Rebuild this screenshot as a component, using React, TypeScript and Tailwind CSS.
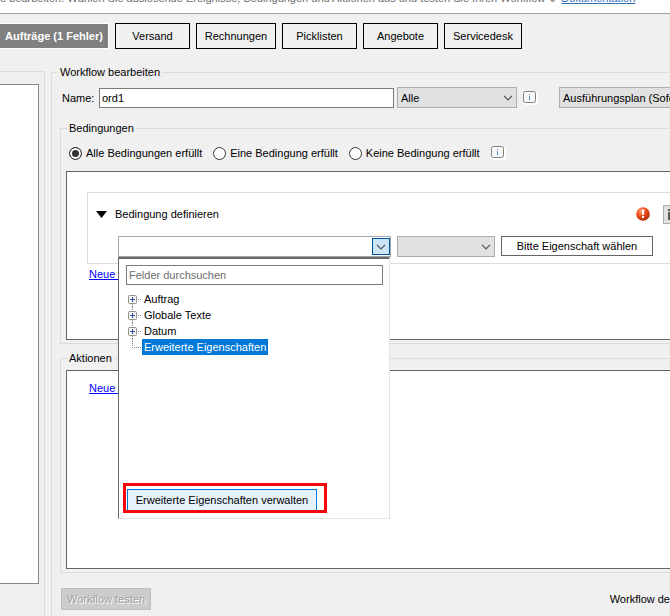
import { useState } from 'react'

const tabs = [
  { name: 'Versand', width: 'w-[75px]' },
  { name: 'Rechnungen', width: 'w-20' },
  { name: 'Picklisten', width: 'w-[75px]' },
  { name: 'Angebote', width: 'w-[75px]' },
  { name: 'Servicedesk', width: 'w-[78px]' },
]

const matchModes = ['Alle Bedingungen erfüllt', 'Eine Bedingung erfüllt', 'Keine Bedingung erfüllt']

const fieldGroups = ['Auftrag', 'Globale Texte', 'Datum']

function Chevron() {
  return (
    <svg width="10" height="6" viewBox="0 0 10 6" fill="none" stroke="#505050" strokeWidth="1.2" aria-hidden="true">
      <path d="M1 0.8 L5 4.8 L9 0.8" />
    </svg>
  )
}

function InfoIcon() {
  return (
    <svg width="15" height="14" viewBox="0 0 15 14" aria-hidden="true" className="block shrink-0">
      <rect x="1" y="1" width="14" height="13" rx="2" fill="#fff" />
      <rect x="0.5" y="0.5" width="12" height="11" rx="2" fill="#f7f7f7" stroke="#808080" />
      <rect x="6" y="3" width="1" height="1" fill="#5b93cc" />
      <rect x="6" y="5" width="1" height="4" fill="#5b93cc" />
    </svg>
  )
}

function ErrorIcon() {
  return (
    <svg width="14" height="14" viewBox="0 0 14 14" aria-hidden="true" className="shrink-0">
      <defs>
        <radialGradient id="errorFill" cx="0.35" cy="0.3" r="0.75">
          <stop offset="0" stopColor="#ff9a70" />
          <stop offset="0.5" stopColor="#ee4a1c" />
          <stop offset="1" stopColor="#a92a0c" />
        </radialGradient>
      </defs>
      <circle cx="7" cy="7" r="6.8" fill="url(#errorFill)" />
      <path d="M5.6 2.6 h2.8 l-0.5 5.4 h-1.8 z" fill="#fff" />
      <rect x="6" y="9" width="2" height="2" fill="#fff" />
    </svg>
  )
}

function TreeBranch({ first }: { first: boolean }) {
  return (
    <svg width="14" height="16" viewBox="0 0 14 16" aria-hidden="true" className="shrink-0">
      {!first && <path d="M4.5 0 V4" stroke="#808080" strokeDasharray="1 1" />}
      <path d="M4.5 13 V16" stroke="#808080" strokeDasharray="1 1" />
      <path d="M10 8.5 H14" stroke="#808080" strokeDasharray="1 1" />
      <rect x="0.5" y="4.5" width="8" height="8" rx="1" fill="#f7f7f7" stroke="#919191" />
      <path d="M2 8.5 H7 M4.5 6 V11" stroke="#3a4fa0" />
    </svg>
  )
}

function FieldPopup() {
  return (
    <div className="absolute top-full left-0 z-10 flex h-[262px] w-[272px] flex-col border-t-2 border-r border-b border-l border-t-[#696969] border-r-[#e3e3e3] border-b-[#e3e3e3] border-l-[#696969] bg-white pt-1.5 pr-1.5 pb-[7px] pl-[7px]">
      <input
        type="text"
        placeholder="Felder durchsuchen"
        aria-label="Felder durchsuchen"
        className="h-5 w-full border border-[#7a7a7a] bg-white px-0.5 outline-none placeholder:text-[#6d6d6d]"
      />
      <ul className="mt-1.5 ml-0.5">
        {fieldGroups.map((group, i) => (
          <li key={group} className="flex h-4 items-center">
            <TreeBranch first={i === 0} />
            <span className="px-0.5">{group}</span>
          </li>
        ))}
        <li className="flex h-4 items-center">
          <svg width="14" height="16" viewBox="0 0 14 16" fill="none" aria-hidden="true" className="shrink-0">
            <path d="M4.5 0 V8.5 H14" stroke="#808080" strokeDasharray="1 1" />
          </svg>
          <span className="bg-[#0078d7] px-0.5 leading-4 text-white">Erweiterte Eigenschaften</span>
        </li>
      </ul>
      <div className="mt-auto flex pl-px">
        <button type="button" className="relative h-[22px] w-[190px] border border-[#0078d7] bg-[#e5f1fb]">
          Erweiterte Eigenschaften verwalten
          <span className="pointer-events-none absolute -top-[7px] -right-[11px] -bottom-[3px] -left-[5px] border-[3px] border-[#f5070b]" />
        </button>
      </div>
    </div>
  )
}

export default function App() {
  const [name, setName] = useState('ord1')
  const [mode, setMode] = useState(matchModes[0])
  const [open, setOpen] = useState(true)

  return (
    <div className="flex min-h-screen flex-col overflow-hidden bg-[#f0f0f0] font-['Liberation_Sans',Arial,sans-serif] text-[11px] leading-[14px] whitespace-nowrap text-black">
      <header className="flex h-3.5 items-end gap-1 overflow-hidden border-b border-[#a0a0a0] bg-white pb-2 text-[#6d6d6d]">
        <p>e bearbeiten. Wählen Sie auslösende Ereignisse, Bedingungen und Aktionen aus und testen Sie Ihren Workflow ⇓</p>
        <a href="#doku" className="text-[#2f6fb8] underline">Dokumentation</a>
      </header>

      <nav className="flex gap-1.5 pt-[9px]">
        <button type="button" className="h-[26px] w-[109px] border border-l-0 border-white bg-[#808080] font-bold text-white">
          Aufträge (1 Fehler)
        </button>
        {tabs.map(tab => (
          <button key={tab.name} type="button" className={`h-[26px] border border-black ${tab.width}`}>
            {tab.name}
          </button>
        ))}
      </nav>

      <main className="mt-4 flex flex-1 gap-1.5">
        <div className="mt-1.5 flex w-[45px] shrink-0 flex-col border-t border-r border-[#dcdcdc] pt-3 pr-[5px] pb-8">
          <div className="flex-1 border border-l-0 border-[#828790] bg-white" />
        </div>

        <fieldset className="min-w-0 flex-1 border-t border-l border-[#dcdcdc]">
          <legend className="ml-1.5 px-0.5">Workflow bearbeiten</legend>

          <div className="mt-2 flex h-[21px] items-center pl-2.5">
            <label htmlFor="name" className="w-[37px] shrink-0">Name:</label>
            <input
              id="name"
              type="text"
              value={name}
              onChange={e => setName(e.target.value)}
              className="h-5 w-[295px] shrink-0 border border-[#7a7a7a] bg-white px-0.5 outline-none"
            />
            <div className="relative ml-[3px] shrink-0">
              <select aria-label="Filter" className="block h-[21px] w-[120px] appearance-none border border-[#adadad] bg-[#e1e1e1] px-[3px]">
                <option>Alle</option>
              </select>
              <span className="pointer-events-none absolute top-2 right-1"><Chevron /></span>
            </div>
            <button type="button" aria-label="Info" className="mr-[21px] ml-1.5"><InfoIcon /></button>
            <button type="button" className="h-[21px] shrink-0 border border-[#adadad] bg-[#e1e1e1] px-[3px]">
              Ausführungsplan (Sofort)
            </button>
          </div>

          <fieldset className="mt-[13px] ml-2 min-w-0 border-y border-l border-[#dcdcdc] pb-[3px] pl-[5px]">
            <legend className="ml-px px-0.5">Bedingungen</legend>
            <div className="mt-[11px] flex items-center gap-[11px] pl-[3px]">
              {matchModes.map(m => (
                <label key={m} className="flex items-center gap-1">
                  <input
                    type="radio"
                    name="mode"
                    checked={mode === m}
                    onChange={() => setMode(m)}
                    className="size-[13px] appearance-none rounded-full border border-[#333] bg-white checked:bg-[#333] checked:shadow-[inset_0_0_0_2px_#fff]"
                  />
                  {m}
                </label>
              ))}
              <button type="button" aria-label="Info"><InfoIcon /></button>
            </div>

            <div className="mt-[11px] min-h-[169px] border-y border-l border-[#646464] bg-white pt-5 pl-5">
              <div className="border-y border-l border-[#dcdcdc] pt-2.5 pb-1.5">
                <div className="flex h-[22px] items-center pl-2">
                  <button type="button" aria-label="Bedingung einklappen">
                    <svg width="11" height="7" viewBox="0 0 11 7" aria-hidden="true">
                      <path d="M0 0 H11 L5.5 7 Z" fill="#000" />
                    </svg>
                  </button>
                  <span className="ml-2">Bedingung definieren</span>
                  <span className="mr-[13px] ml-auto"><ErrorIcon /></span>
                  <button type="button" aria-label="Bedingung löschen" className="h-[19px] w-[7px] border border-r-0 border-[#adadad] bg-[#e1e1e1]">
                    <svg width="2" height="11" viewBox="0 0 2 11" className="ml-auto" aria-hidden="true">
                      <path d="M0 1 H2 M1 3 V11" stroke="#222" strokeWidth="1.4" />
                    </svg>
                  </button>
                </div>
                <div className="mt-[11px] flex gap-1.5 pl-[30px]">
                  <div className="relative shrink-0">
                    <div className="flex h-[21px] w-[273px] border border-[#a5a5ab] bg-white">
                      <input type="text" aria-label="Eigenschaft" className="min-w-0 flex-1 px-1 outline-none" />
                      <button
                        type="button"
                        aria-label="Eigenschaften anzeigen"
                        onClick={() => setOpen(!open)}
                        className="my-px flex w-[18px] items-center justify-center border border-[#005499] bg-[#cce4f7]"
                      >
                        <Chevron />
                      </button>
                    </div>
                    {open && <FieldPopup />}
                  </div>
                  <div className="relative shrink-0">
                    <select aria-label="Operator" className="block h-[21px] w-[98px] appearance-none border border-[#adadad] bg-[#e1e1e1]" />
                    <span className="pointer-events-none absolute top-2 right-1"><Chevron /></span>
                  </div>
                  <button type="button" className="h-5 w-[152px] shrink-0 border border-[#646464] bg-white">
                    Bitte Eigenschaft wählen
                  </button>
                </div>
              </div>
              <a href="#bedingung" className="mt-[3px] ml-0.5 inline-block text-[#0000ff] underline">Neue&nbsp;</a>
            </div>
          </fieldset>

          <fieldset className="mt-[7px] ml-2 min-w-0 border-y border-l border-[#dcdcdc] pb-[3px] pl-[5px]">
            <legend className="ml-px px-0.5">Aktionen</legend>
            <div className="mt-[5px] min-h-[199px] border-y border-l border-[#646464] bg-white pt-2.5 pl-[22px]">
              <a href="#aktion" className="inline-block text-[#0000ff] underline">Neue&nbsp;</a>
            </div>
          </fieldset>

          <div className="mt-[15px] flex items-center justify-between pl-[9px]">
            <button type="button" disabled className="h-[22px] w-[90px] border border-[#bfbfbf] bg-[#cccccc] text-[#a0a0a0] [text-shadow:1px_1px_0_#fff]">
              Workflow testen
            </button>
            <span>Workflow de</span>
          </div>
        </fieldset>
      </main>
    </div>
  )
}
